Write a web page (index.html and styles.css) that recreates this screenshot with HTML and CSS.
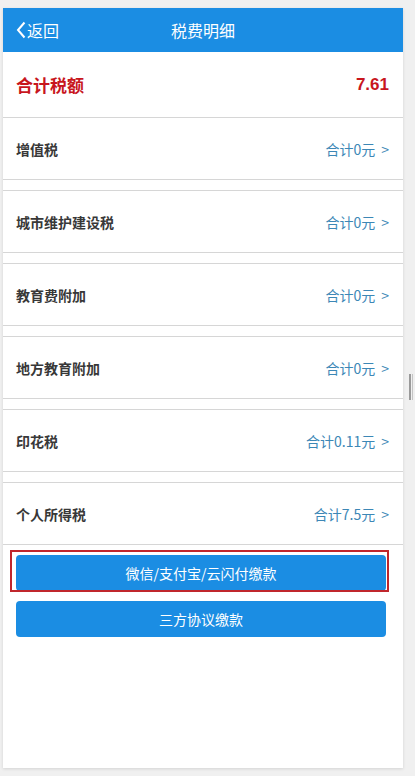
FILE: index.html
```html
<!DOCTYPE html>
<html lang="zh">
<head>
  <meta charset="UTF-8">
  <meta name="viewport" content="width=device-width, initial-scale=1.0">
  <title>税费明细</title>
  <link rel="stylesheet" href="styles.css">
</head>
<body>

  <div class="page">
    <!-- 顶部导航 -->
    <div class="header">
      <a class="back">
        <svg width="10" height="18" viewBox="0 0 10 18"><path d="M8.5 1.5 L2 9 L8.5 16.5" fill="none" stroke="#fff" stroke-width="2"/></svg>
        返回
      </a>
      <span class="title">税费明细</span>
    </div>

    <div class="total">
      <span>合计税额</span>
      <span class="amount">7.61</span>
    </div>

    <div class="tax-item"><span class="name">增值税</span><span class="sum">合计0元<i>&gt;</i></span></div>
    <div class="tax-item"><span class="name">城市维护建设税</span><span class="sum">合计0元<i>&gt;</i></span></div>
    <div class="tax-item"><span class="name">教育费附加</span><span class="sum">合计0元<i>&gt;</i></span></div>
    <div class="tax-item"><span class="name">地方教育附加</span><span class="sum">合计0元<i>&gt;</i></span></div>
    <div class="tax-item"><span class="name">印花税</span><span class="sum">合计0.11元<i>&gt;</i></span></div>
    <div class="tax-item last"><span class="name">个人所得税</span><span class="sum">合计7.5元<i>&gt;</i></span></div>

    <div class="actions">
      <button class="pay-btn marked">微信/支付宝/云闪付缴款</button>
      <button class="pay-btn">三方协议缴款</button>
    </div>
  </div>

  <div class="grip"></div>

</body>
</html>
```

FILE: styles.css
```css
/* Global */
body {
  margin: 0;
  padding: 8px 0 0 3px;
  background-color: #f0f0f0;
  font-family: "Microsoft YaHei", "Noto Sans CJK SC", sans-serif;
  height: 776px;
  box-sizing: border-box;
  overflow: hidden;
  position: relative;
}

.page {
  width: 400px;
  height: 760px;
  background: #fff;
  box-shadow: 0 1px 3px rgba(0, 0, 0, 0.12);
}

/* Header */
.header {
  height: 44px;
  background-color: #1b8de3;
  color: #fff;
  display: flex;
  align-items: center;
  justify-content: center;
  position: relative;
}

.back {
  position: absolute;
  left: 13px;
  top: 0;
  height: 44px;
  display: flex;
  align-items: center;
  gap: 1px;
  font-size: 16px;
}

.title {
  font-size: 16px;
}

/* Total */
.total {
  height: 65px;
  display: flex;
  align-items: center;
  justify-content: space-between;
  padding: 0 14px 0 13px;
  color: #c8161d;
  font-size: 17px;
  font-weight: bold;
}

.total .amount {
  font-family: "Liberation Sans", Arial, sans-serif;
  font-size: 17px;
}

/* Tax rows */
.tax-item {
  height: 61px;
  border-top: 1px solid #d6d6d6;
  border-bottom: 1px solid #d6d6d6;
  margin-bottom: 10px;
  display: flex;
  align-items: center;
  justify-content: space-between;
  padding: 0 14px 0 13px;
  font-size: 14px;
}

.tax-item.last {
  margin-bottom: 0;
}

.tax-item .name {
  color: #383838;
  font-weight: bold;
}

.tax-item .sum {
  color: #3c87b6;
}

.tax-item .sum i {
  font-style: normal;
  margin-left: 6px;
}

/* Buttons */
.actions {
  display: flex;
  flex-direction: column;
  gap: 10px;
  padding: 10px 17px 0 13px;
}

.pay-btn {
  height: 36px;
  border: none;
  border-radius: 4px;
  background-color: #1b8de3;
  color: #fff;
  font-family: inherit;
  font-size: 14px;
  position: relative;
}

.pay-btn.marked::after {
  content: "";
  position: absolute;
  left: -6px;
  right: -3px;
  top: -5px;
  bottom: -1px;
  border: 2px solid #c0262c;
}

/* window resize grip */
.grip {
  position: absolute;
  left: 409px;
  top: 374px;
  width: 1px;
  height: 26px;
  border-left: 2px solid #9a9a9a;
  border-right: 1px solid #c4c4c4;
}
```
